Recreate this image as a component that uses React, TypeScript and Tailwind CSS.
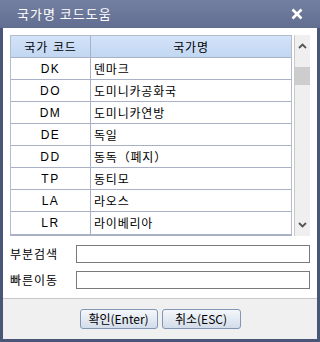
const rows: [string, string][] = [
  ["DK", "덴마크"],
  ["DO", "도미니카공화국"],
  ["DM", "도미니카연방"],
  ["DE", "독일"],
  ["DD", "동독（폐지）"],
  ["TP", "동티모"],
  ["LA", "라오스"],
  ["LR", "라이베리아"],
];

const font = { fontFamily: '"Noto Sans CJK KR", "DejaVu Sans", sans-serif' };

const btn =
  "h-[20px] rounded-[3px] border border-[#8295b3] bg-gradient-to-b from-[#f4f7fb] to-[#d3dcea] text-[12px] leading-none text-black";

export default function App() {
  return (
    <div
      className="flex h-[342px] w-[320px] flex-col bg-[#4a5677]"
      style={font}
    >
      <div className="flex h-[28px] shrink-0 items-center justify-between bg-gradient-to-b from-[#7480a1] to-[#626e91] pl-[17px] pr-[17px] text-white">
        <span className="text-[13px] tracking-[1px]">국가명 코드도움</span>
        <svg width="12" height="12" viewBox="0 0 12 12">
          <path
            d="M1.5 1.5 L10.5 10.5 M10.5 1.5 L1.5 10.5"
            stroke="white"
            strokeWidth="2.6"
          />
        </svg>
      </div>

      <div className="mx-[3px] mb-[3px] flex flex-1 flex-col bg-white">
        <div className="flex gap-[2px] px-[7px] pt-[7px]">
          <div className="w-[282px] border border-b-2 border-[#b4bbcb] border-b-[#a9b1c6] text-[12px] tracking-[0.8px] text-black">
            <div className="flex h-[22px] border-b border-[#a9b1c6] bg-gradient-to-b from-[#d3e3f8] to-[#c2d7f2]">
              <div className="flex w-[80px] items-center justify-center gap-[5px] border-r border-[#a9b1c6]">
                <span>국가</span>
                <span>코드</span>
              </div>
              <div className="flex flex-1 items-center justify-center">국가명</div>
            </div>
            {rows.map(([code, name], i) => (
              <div
                key={code}
                className={`flex h-[22px] ${i < rows.length - 1 ? "border-b border-[#a9b1c6]" : ""}`}
              >
                <div
                  className="flex w-[80px] items-center justify-center border-r border-[#a9b1c6] tracking-[1.5px]"
                  style={{ fontFamily: '"Liberation Sans", sans-serif' }}
                >
                  {code}
                </div>
                <div className="flex flex-1 items-center pl-[3px]">{name}</div>
              </div>
            ))}
          </div>
          <div className="flex w-[16px] flex-col items-center bg-[#efefef] border-l border-[#c8c8c8]">
            <svg width="9" height="6" viewBox="0 0 9 6" className="mt-[8px]">
              <path d="M1 5 L4.5 1.5 L8 5" stroke="#555" strokeWidth="1.8" fill="none" />
            </svg>
            <div className="mt-[18px] h-[18px] w-[15px] bg-[#cdcdcd]" />
            <div className="flex-1" />
            <svg width="9" height="6" viewBox="0 0 9 6" className="mb-[8px]">
              <path d="M1 1 L4.5 4.5 L8 1" stroke="#555" strokeWidth="1.8" fill="none" />
            </svg>
          </div>
        </div>

        <div className="flex flex-col gap-[8px] px-[7px] pt-[9px] text-[12px] tracking-[1px] text-black">
          <div className="flex items-center">
            <span className="w-[66px]">부분검색</span>
            <input className="h-[18px] w-[234px] border border-[#7a7a7a] bg-white outline-none" />
          </div>
          <div className="flex items-center">
            <span className="w-[66px]">빠른이동</span>
            <input className="h-[18px] w-[234px] border border-[#7a7a7a] bg-white outline-none" />
          </div>
        </div>

        <div className="mt-[9px] flex flex-1 items-start justify-center gap-[4px] border-t border-[#c8c8c8] bg-[#f0f0f0] pt-[10px]">
          <button type="button" className={`${btn} w-[78px]`}>
            확인(Enter)
          </button>
          <button type="button" className={`${btn} w-[79px]`}>
            취소(ESC)
          </button>
        </div>
      </div>
    </div>
  );
}
